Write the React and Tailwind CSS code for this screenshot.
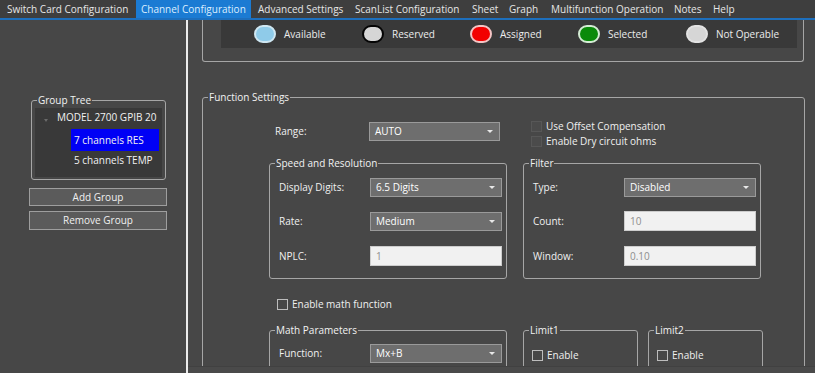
import React from 'react';

const menuItems = [
  { label: 'Switch Card Configuration', w: 'w-[134px] ml-[2px]' },
  { label: 'Channel Configuration', w: 'w-[115px]', active: true },
  { label: 'Advanced Settings', w: 'w-[99px] pl-[7px]' },
  { label: 'ScanList Configuration', w: 'w-[117px]' },
  { label: 'Sheet', w: 'w-[37px]' },
  { label: 'Graph', w: 'w-[42px]' },
  { label: 'Multifunction Operation', w: 'w-[123px]' },
  { label: 'Notes', w: 'w-[39px]' },
  { label: 'Help', w: 'w-[40px]' },
];

const legendItems = [
  { label: 'Available', dot: 'bg-[#8fcbe9] border-[#cfe7f2]' },
  { label: 'Reserved', dot: 'bg-[#d6d6d6] border-[#050505]' },
  { label: 'Assigned', dot: 'bg-[#f20000] border-[#f3c4c4]' },
  { label: 'Selected', dot: 'bg-[#0a8a0a] border-[#d4ecd4]' },
  { label: 'Not Operable', dot: 'bg-[#d6d6d6] border-[#e2e2e2]' },
];

function GroupBox({ title, className = '', inner = '', children }) {
  return (
    <fieldset className={`border border-[#a6a6a6] rounded-[3px] ${className}`}>
      <legend className="ml-[5px] px-[1px] leading-[16px] text-[#f2f2f2] whitespace-nowrap">{title}</legend>
      <div className={inner}>{children}</div>
    </fieldset>
  );
}

function Select({ value, className = '' }) {
  return (
    <div className={`h-[19px] bg-[#6e6e6e] border border-[#9a9a9a] flex items-center justify-between pl-[5px] pr-[6px] text-white ${className}`}>
      <span>{value}</span>
      <span className="w-0 h-0 border-l-[3px] border-r-[3px] border-t-[3px] border-l-transparent border-r-transparent border-t-[#e8e8e8]" />
    </div>
  );
}

function TextBox({ value, className = '' }) {
  return (
    <div className={`h-[20px] bg-[#f1f1f1] border border-[#cdcdcd] flex items-center pl-[5px] text-[#8e8e8e] ${className}`}>
      {value}
    </div>
  );
}

function Row({ label, children, mt }) {
  return (
    <div className={`flex items-center h-[20px] ${mt}`}>
      <span className="w-[100px] pl-[9px] text-[#f0f0f0] shrink-0 whitespace-nowrap">{label}</span>
      {children}
    </div>
  );
}

function Check({ label, dark }) {
  return (
    <div className="flex items-center h-[15px]">
      <span className={`w-[11px] h-[11px] border ${dark ? 'border-[#575757] bg-[#4b4b4b]' : 'border-[#bdbdbd]'}`} />
      <span className="ml-[4px] text-[#f0f0f0] whitespace-nowrap">{label}</span>
    </div>
  );
}

export default function App() {
  return (
    <div className="w-[815px] h-[373px] overflow-hidden bg-[#474747] text-[10px] font-['Open_Sans',sans-serif] flex flex-col">
      {/* menu */}
      <div className="h-[20px] shrink-0 bg-[#3e3e3e] border-b-[2px] border-[#1d6fbd] flex items-stretch">
        {menuItems.map((m) => (
          <div
            key={m.label}
            className={`${m.w} pl-[5px] whitespace-nowrap flex items-center text-[10px] ${m.active ? 'bg-[#1b7bd3] text-[#dcefff]' : 'text-[#e6e6e6]'}`}
          >
            {m.label}
          </div>
        ))}
      </div>

      <div className="flex flex-1 min-h-0">
        {/* left panel */}
        <div className="w-[186px] shrink-0 flex flex-col pl-[29px]">
          <GroupBox title="Group Tree" className="mt-[72px] ml-[2px] w-[135px]" inner="px-[3px] pb-[2px]">
            <div className="bg-[#393939] h-[69px] flex flex-col text-[#f2f2f2] whitespace-nowrap">
              <div className="h-[18px] flex items-center">
                <span className="ml-[9px] mt-[6px] w-0 h-0 border-l-[2px] border-r-[2px] border-t-[3px] border-l-transparent border-r-transparent border-t-[#6a6a6a]" />
                <span className="ml-[9px]">MODEL 2700 GPIB 20</span>
              </div>
              <div className="h-[3px]" />
              <div className="ml-[36px] w-[88px] h-[22px] bg-[#0000f5] flex items-center pl-[3px]">7 channels RES</div>
              <div className="ml-[36px] h-[19px] flex items-center pl-[3px]">5 channels TEMP</div>
            </div>
          </GroupBox>
          <div className="mt-[8px] w-[138px] h-[18px] bg-[#5b5b5b] border border-[#9e9e9e] flex items-center justify-center text-[#f0f0f0]">
            Add Group
          </div>
          <div className="mt-[5px] w-[138px] h-[19px] bg-[#5b5b5b] border border-[#9e9e9e] flex items-center justify-center text-[#f0f0f0]">
            Remove Group
          </div>
        </div>

        {/* divider */}
        <div className="w-[2px] shrink-0 bg-[#ececec]" />

        {/* right panel */}
        <div className="flex-1 flex flex-col min-h-0">
          <div className="flex-1 min-h-0 overflow-hidden flex flex-col">
            <div className="ml-[14px] w-[602px] h-[42px] shrink-0 border border-t-0 border-[#a6a6a6] rounded-b-[3px] pl-[18px] pr-[6px]">
              <div className="h-[28px] bg-[#393939] flex items-center pl-[33px] text-[#ececec]">
                {legendItems.map((l) => (
                  <div key={l.label} className="w-[108px] flex items-center">
                    <span className={`w-[22px] h-[18px] rounded-full border-2 ${l.dot}`} />
                    <span className="ml-[8px]">{l.label}</span>
                  </div>
                ))}
              </div>
            </div>

            <GroupBox title="Function Settings" className="mt-[27px] ml-[14px] w-[603px] h-[320px] shrink-0" inner="pl-[66px]">
              {/* range + options */}
              <div className="flex h-[50px]">
                <div className="w-[238px] pt-[17px]">
                  <div className="flex items-center h-[19px]">
                    <span className="w-[100px] pl-[6px] text-[#f0f0f0]">Range:</span>
                    <Select value="AUTO" className="w-[131px]" />
                  </div>
                </div>
                <div className="ml-[16px] pl-[8px] pt-[14px]">
                  <Check dark label="Use Offset Compensation" />
                  <Check dark label="Enable Dry circuit ohms" />
                </div>
              </div>

              <div className="flex">
                <GroupBox title="Speed and Resolution" className="w-[238px] h-[124px]">
                  <Row label="Display Digits:" mt="mt-[6px]"><Select value="6.5 Digits" className="w-[132px]" /></Row>
                  <Row label="Rate:" mt="mt-[14px]"><Select value="Medium" className="w-[132px]" /></Row>
                  <Row label="NPLC:" mt="mt-[15px]"><TextBox value="1" className="w-[132px]" /></Row>
                </GroupBox>
                <GroupBox title="Filter" className="ml-[16px] w-[238px] h-[124px]">
                  <Row label="Type:" mt="mt-[6px]"><Select value="Disabled" className="w-[132px]" /></Row>
                  <Row label="Count:" mt="mt-[14px]"><TextBox value="10" className="w-[132px]" /></Row>
                  <Row label="Window:" mt="mt-[15px]"><TextBox value="0.10" className="w-[132px]" /></Row>
                </GroupBox>
              </div>

              <div className="mt-[18px] pl-[8px] h-[14px] flex items-center">
                <Check label="Enable math function" />
              </div>

              <div className="flex mt-[11px]">
                <GroupBox title="Math Parameters" className="w-[238px] h-[80px]">
                  <Row label="Function:" mt="mt-[5px]"><Select value="Mx+B" className="w-[132px]" /></Row>
                </GroupBox>
                <GroupBox title="Limit1" className="ml-[16px] w-[115px] h-[80px]" inner="pl-[8px]">
                  <div className="mt-[10px]"><Check label="Enable" /></div>
                </GroupBox>
                <GroupBox title="Limit2" className="ml-[10px] w-[115px] h-[80px]" inner="pl-[8px]">
                  <div className="mt-[10px]"><Check label="Enable" /></div>
                </GroupBox>
              </div>
            </GroupBox>
          </div>
          {/* bottom edge strip */}
          <div className="h-[7px] shrink-0 bg-[#4a4a4a] border-t border-[#414141]" />
        </div>
      </div>
    </div>
  );
}
